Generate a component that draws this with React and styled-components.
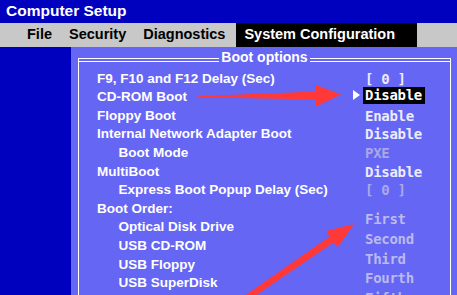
import React from 'react';
import styled, { createGlobalStyle, css } from 'styled-components';

const GlobalStyle = createGlobalStyle`
  html, body { margin: 0; padding: 0; background: #0000bf; }
  body { width: 457px; height: 295px; overflow: hidden; }
`;

const Screen = styled.div`
  position: relative;
  width: 457px;
  height: 295px;
  overflow: hidden;
  background: #0000bf;
  display: flex;
  flex-direction: column;
  font-family: "Liberation Sans", Arial, sans-serif;
  color: #fff;
`;

const TitleBar = styled.div`
  height: 23px;
  box-sizing: border-box;
  padding: 0 0 2px 6px;
  font-size: 15.5px;
  font-weight: bold;
  line-height: 21px;
`;

const MenuBar = styled.nav`
  height: 24px;
  display: flex;
  gap: 1px;
  padding-left: 19px;
  background: #c8c8c8;
`;

const MenuItem = styled.div`
  height: 24px;
  padding: 0 8px;
  font-size: 14.5px;
  font-weight: bold;
  line-height: 22px;
  color: #000;
  white-space: nowrap;
  ${(p) =>
    p.$active &&
    css`
      margin-left: 2px;
      padding-right: 22px;
      background: #000;
      color: #fff;
    `}
`;

const Body = styled.div`
  flex: 1;
  display: flex;
  min-height: 0;
`;

const Gutter = styled.div`
  width: 71px;
  flex-shrink: 0;
`;

const Panel = styled.section`
  flex: 1;
  display: flex;
  background: #6666f4;
  padding: 11px 6px 0 7px;
`;

const Frame = styled.div`
  flex: 1;
  display: flex;
  flex-direction: column;
  border-left: 1px solid #fff;
  border-right: 1px solid #fff;
`;

const Header = styled.div`
  height: 4px;
  display: flex;
  align-items: flex-start;
`;

const Rule = styled.div`
  flex: 1;
  height: 4px;
  box-sizing: border-box;
  border-top: 1px solid #fff;
  border-bottom: 1px solid #fff;
`;

const Legend = styled.div`
  margin-top: -9.3px;
  padding: 0 2px;
  font-size: 14px;
  font-weight: bold;
  line-height: 16px;
  white-space: nowrap;
`;

const Settings = styled.div`
  padding: 7.7px 0 0 18px;
  display: grid;
  grid-template-columns: 268px 1fr;
  grid-auto-rows: 18.6px;
`;

const Label = styled.div`
  padding-left: ${(p) => (p.$indent ? '21.5px' : '0')};
  font-size: 13.5px;
  font-weight: bold;
  line-height: 18.6px;
  white-space: nowrap;
`;

const tones = {
  bright: '#ececff',
  white: '#ffffff',
  dim: '#a9a9e6',
  soft: '#babaee',
};

const Value = styled.div`
  font-family: "DejaVu Sans Mono", "Liberation Mono", monospace;
  font-size: 14px;
  font-weight: bold;
  letter-spacing: -0.3px;
  line-height: ${(p) => p.$lh || '18.6px'};
  color: ${(p) => tones[p.$tone || 'bright']};
  white-space: pre;
`;

const Selected = styled.span`
  position: relative;
  display: inline-block;
  vertical-align: top;
  margin: -1px 0 0 -2px;
  padding: 0 3px 0 2px;
  height: 17px;
  line-height: 17px;
  background: #000;
  color: #fff;

  &::before {
    content: '';
    position: absolute;
    left: -10px;
    top: 3px;
    border-left: 7px solid #fff;
    border-top: 5px solid transparent;
    border-bottom: 5px solid transparent;
  }
`;

const BootOrder = styled.div`
  padding-left: 18px;
  display: grid;
  grid-template-columns: 268px 1fr;
`;

const Column = styled.div`
  display: flex;
  flex-direction: column;
  padding-top: ${(p) => p.$offset || '0'};
`;

const Arrows = styled.svg`
  position: absolute;
  left: 0;
  top: 0;
  pointer-events: none;
`;

const settings = [
  { label: 'F9, F10 and F12 Delay (Sec)', value: '[ 0 ]' },
  { label: 'CD-ROM Boot', value: 'Disable', selected: true },
  { label: 'Floppy Boot', value: 'Enable' },
  { label: 'Internal Network Adapter Boot', value: 'Disable' },
  { label: 'Boot Mode', value: 'PXE', indent: true, tone: 'dim' },
  { label: 'MultiBoot', value: 'Disable' },
  { label: 'Express Boot Popup Delay (Sec)', value: '[ 0 ]', indent: true, tone: 'dim' },
];

const bootDevices = ['Optical Disk Drive', 'USB CD-ROM', 'USB Floppy', 'USB SuperDisk'];
const bootRanks = ['First', 'Second', 'Third', 'Fourth', 'Fifth'];

export default function App() {
  return (
    <>
      <GlobalStyle />
      <Screen>
        <TitleBar>Computer Setup</TitleBar>
        <MenuBar>
          <MenuItem>File</MenuItem>
          <MenuItem>Security</MenuItem>
          <MenuItem>Diagnostics</MenuItem>
          <MenuItem $active>System Configuration</MenuItem>
        </MenuBar>
        <Body>
          <Gutter />
          <Panel>
            <Frame>
              <Header>
                <Rule />
                <Legend>Boot options</Legend>
                <Rule />
              </Header>
              <Settings>
                {settings.map((s) => (
                  <React.Fragment key={s.label}>
                    <Label $indent={s.indent}>{s.label}</Label>
                    <Value $tone={s.tone}>
                      {s.selected ? <Selected>{s.value}</Selected> : s.value}
                    </Value>
                  </React.Fragment>
                ))}
              </Settings>
              <BootOrder>
                <Column>
                  <Label>Boot Order:</Label>
                  {bootDevices.map((d) => (
                    <Label key={d} $indent>
                      {d}
                    </Label>
                  ))}
                </Column>
                <Column $offset="10.5px">
                  {bootRanks.map((r) => (
                    <Value key={r} $tone="soft" $lh="19.7px">
                      {r}
                    </Value>
                  ))}
                </Column>
              </BootOrder>
            </Frame>
          </Panel>
        </Body>
        <Arrows width="457" height="295" viewBox="0 0 457 295">
          <defs>
            <filter id="soft" x="-10%" y="-10%" width="120%" height="120%">
              <feGaussianBlur stdDeviation="0.5" />
            </filter>
          </defs>
          <g fill="#ff3838" filter="url(#soft)">
            <polygon points="197,96.2 316,91.5 316,85 341,94.5 316,106.5 316,99.5 197,97.2" />
            <polygon points="241.1,298.2 329.8,236.4 326.1,231.1 354,224 337.5,247.5 333.8,242.2 244.5,303.2" />
          </g>
        </Arrows>
      </Screen>
    </>
  );
}
